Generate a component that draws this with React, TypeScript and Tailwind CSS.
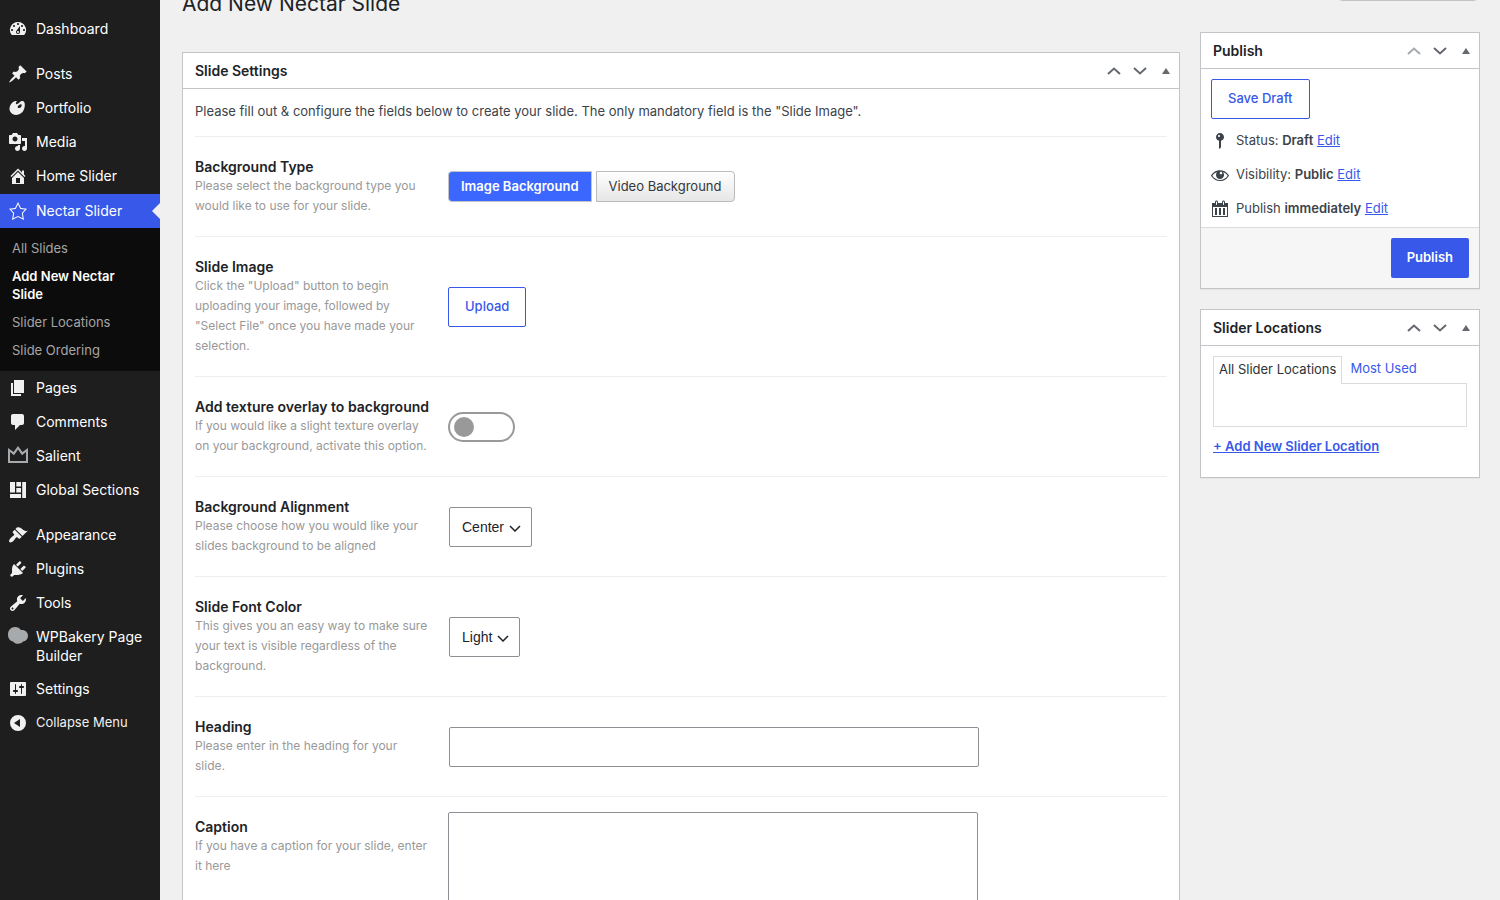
import type { ReactNode } from "react";
import clsx from "clsx";

const icons = {
  dashboard:
    "M3.76 16h12.48A7.998 7.998 0 0 0 10 3a7.998 7.998 0 0 0-6.24 13zM10 4c.55 0 1 .45 1 1s-.45 1-1 1-1-.45-1-1 .45-1 1-1zM6 6c.55 0 1 .45 1 1s-.45 1-1 1-1-.45-1-1 .45-1 1-1zm8 0c.55 0 1 .45 1 1s-.45 1-1 1-1-.45-1-1 .45-1 1-1zm-5.37 5.55L12 7v6c0 1.1-.9 2-2 2s-2-.9-2-2c0-.57.24-1.08.63-1.45zM4 10c.55 0 1 .45 1 1s-.45 1-1 1-1-.45-1-1 .45-1 1-1zm12 0c.55 0 1 .45 1 1s-.45 1-1 1-1-.45-1-1 .45-1 1-1zm-5 3c0-.55-.45-1-1-1s-1 .45-1 1 .45 1 1 1 1-.45 1-1z",
  post: "M10.44 3.02l1.82-1.82 6.36 6.35-1.83 1.82c-1.05-.68-2.48-.57-3.41.36l-.75.75c-.92.93-1.04 2.35-.35 3.41l-1.83 1.82-2.41-2.41-2.8 2.79c-.42.42-3.38 2.71-3.8 2.29s1.86-3.39 2.28-3.81l2.79-2.79L4.1 9.36l1.83-1.82c1.05.69 2.48.57 3.4-.36l.75-.75c.93-.92 1.05-2.35.36-3.41z",
  art: "M8.55 3.06c1.01.34-1.95 2.01-.1 3.13 1.04.63 3.31-2.22 4.45-2.86.97-.54 2.67-.65 3.53 1.23 1.09 2.38.14 8.57-3.79 11.06-3.97 2.5-8.97 1.23-10.7-2.66-2.01-4.53 3.12-11.09 6.61-9.9zm1.21 6.45c.73 1.64 4.7-.5 3.79-2.8-.59-1.49-4.48 1.25-3.79 2.8z",
  media:
    "M13 11V4c0-.55-.45-1-1-1h-1.67L9 1H5L3.67 3H2c-.55 0-1 .45-1 1v7c0 .55.45 1 1 1h10c.55 0 1-.45 1-1zM7 4.5c1.38 0 2.5 1.12 2.5 2.5S8.38 9.5 7 9.5 4.5 8.38 4.5 7 5.62 4.5 7 4.5zM14 6h5v10.5c0 1.38-1.12 2.5-2.5 2.5S14 17.88 14 16.5s1.12-2.5 2.5-2.5c.17 0 .34.02.5.05V9h-3V6zm-4 8.05V13h2v3.5c0 1.38-1.12 2.5-2.5 2.5S7 17.88 7 16.5 8.12 14 9.5 14c.17 0 .34.02.5.05z",
  home: "M16 8.5l1.53 1.53-1.06 1.06L10 4.6l-6.47 6.49-1.06-1.06L10 2.5l4 4v-2h2v4zm-6-2.46l6 5.99V18H4v-5.97zM12 17v-5H8v5h4z",
  star: "M10 1L7 7l-6 .75 4.13 4.62L4 19l6-3 6 3-1.12-6.63L19 7.75 13 7zm0 2.24l2.34 4.69 4.65.58-3.18 3.56.87 5.15L10 14.88l-4.68 2.34.87-5.15-3.18-3.56 4.65-.58z",
  page: "M6 15V2h10v13H6zm-1 1h8v2H3V5h2v11z",
  comments: "M5 2h9c1.1 0 2 .9 2 2v7c0 1.1-.9 2-2 2h-2l-5 5v-5H5c-1.1 0-2-.9-2-2V4c0-1.1.9-2 2-2z",
  crown: "M0 2l5.500 4L10 0l4.500 6L20 2v15H0zM2 6v9h16V6l-4 3.200L10 3.500 6 9.200z",
  layout: "M2 2h5v10.500H2zM8.300 2H13v4.500H8.300zM8.300 8H13v4.500H8.300zM14.200 2H18v16h-3.800zM2 14h11v4H2z",
  appearance:
    "M14.48 11.06L7.41 3.99l1.5-1.5c.5-.56 2.3-.47 3.51.32 1.21.8 1.43 1.28 2.91 2.1 1.18.64 2.45 1.26 4.45.85zm-.71.71L6.7 4.7 4.93 6.47c-.39.39-.39 1.02 0 1.41l1.06 1.06c.39.39.39 1.03 0 1.42-.6.6-1.43 1.11-2.21 1.69-.35.26-.7.53-1.01.84C1.43 14.23.4 16.08 1.4 17.07c.99 1 2.84-.03 4.18-1.36.31-.31.58-.66.85-1.02.57-.78 1.08-1.61 1.69-2.21.39-.39 1.02-.39 1.41 0l1.06 1.06c.39.39 1.02.39 1.41 0z",
  plugins:
    "M13.11 4.36L9.87 7.6 8 5.73l3.24-3.24c.35-.34 1.05-.2 1.56.32.52.51.66 1.21.31 1.55zm-8 1.77l.91-1.12 9.01 9.01-1.19.84c-.71.71-2.63 1.16-3.82 1.16H6.14L4.9 17.26c-.59.59-1.54.59-2.12 0-.59-.58-.59-1.53 0-2.12l1.24-1.24v-3.88c0-1.13.4-3.19 1.09-3.89zm7.26 3.97l3.24-3.24c.34-.35 1.04-.21 1.55.31.52.51.66 1.21.31 1.55l-3.24 3.25z",
  tools:
    "M16.68 9.77c-1.34 1.34-3.3 1.67-4.95.99l-5.41 6.52c-.99.99-2.59.99-3.58 0s-.99-2.59 0-3.57l6.52-5.42c-.68-1.65-.35-3.61.99-4.95 1.28-1.28 3.12-1.62 4.72-1.06l-2.89 2.89 2.82 2.82 2.86-2.87c.53 1.58.18 3.39-1.08 4.65zM3.81 16.21c.4.39 1.04.39 1.43 0 .4-.4.4-1.04 0-1.43-.39-.4-1.03-.4-1.43 0-.39.39-.39 1.03 0 1.43z",
  bakery:
    "M7 0c2.600 0 4.800 1.200 5.900 3 3.800-.6 7.100 1.900 7.100 5.600 0 3.300-2 5.700-4.900 6-1.300 1.500-3 2.200-5.100 2.200-2.100 0-3.800-.8-4.900-2.300C2 14 0 11.300 0 7.500 0 3.300 3 0 7 0z",
  settings:
    "M18 16V4c0-.55-.45-1-1-1H3c-.55 0-1 .45-1 1v12c0 .55.45 1 1 1h14c.55 0 1-.45 1-1zM8 11h1c.55 0 1 .45 1 1s-.45 1-1 1H8v1.5c0 .28-.22.5-.5.5s-.5-.22-.5-.5V13H6c-.55 0-1-.45-1-1s.45-1 1-1h1V5.500c0-.28.22-.5.5-.5s.5.22.5.5V11zm5-2h-1c-.55 0-1-.45-1-1s.45-1 1-1h1V5.500c0-.28.22-.5.5-.5s.5.22.5.5V7h1c.55 0 1 .45 1 1s-.45 1-1 1h-1v5.500c0 .28-.22.5-.5.5s-.5-.22-.5-.5V9z",
  collapse: "M10 2a8 8 0 1 1 0 16 8 8 0 0 1 0-16zm2 12V6l-6 4z",
  pin: "M14 6c0 1.86-1.28 3.41-3 3.86V16c0 1-2 2-2 2V9.86c-1.72-.45-3-2-3-3.86 0-2.21 1.79-4 4-4s4 1.79 4 4zM8 5c0 .55.45 1 1 1s1-.45 1-1-.45-1-1-1-1 .45-1 1z",
  eye: "M18.3 9.5C15 4.9 8.5 3.8 3.9 7.200c-1.2.9-2.2 2.100-3 3.400.2.4.5.8.8 1.200 3.300 4.600 9.600 5.600 14.200 2.400.9-.7 1.700-1.400 2.400-2.400.3-.4.5-.8.8-1.200-.3-.4-.5-.8-.8-1.100zm-8.200-2.300c.5-.5 1.300-.5 1.800 0s.5 1.300 0 1.800-1.300.5-1.800 0-.5-1.300 0-1.800zm-.1 7.700c-3.100 0-6-1.600-7.700-4.200C3.500 9 5.100 7.800 7 7.200c-.7.8-1 1.700-1 2.700 0 2.200 1.700 4.100 4 4.100 2.200 0 4.100-1.700 4.100-4v-.1c0-1-.4-2-1.100-2.700 1.900.6 3.500 1.800 4.700 3.500-1.700 2.600-4.600 4.200-7.700 4.200z",
  calendar:
    "M15 4h3v14H2V4h3V3c0-.83.67-1.5 1.5-1.5S8 2.17 8 3v1h4V3c0-.83.67-1.5 1.5-1.5S15 2.17 15 3v1zM6 3v2.500c0 .28.22.5.5.5s.5-.22.5-.5V3c0-.28-.22-.5-.5-.5S6 2.720 6 3zm7 0v2.500c0 .28.22.5.5.5s.5-.22.5-.5V3c0-.28-.22-.5-.5-.5s-.5.22-.5.5zm4 14V8H3v9h14zM7 16V9H5v7h2zm4 0V9H9v7h2zm4 0V9h-2v7h2z",
};

type IconName = keyof typeof icons;

function Icon({ name, className }: { name: IconName; className?: string }) {
  return (
    <svg viewBox="0 0 20 20" fill="currentColor" fillRule="evenodd" aria-hidden="true" className={clsx("size-5 shrink-0", className)}>
      <path d={icons[name]} />
    </svg>
  );
}

type MenuEntry = { label: string; icon: IconName; dim?: boolean; gap?: boolean };

const menuTop: MenuEntry[] = [
  { label: "Dashboard", icon: "dashboard" },
  { label: "Posts", icon: "post", gap: true },
  { label: "Portfolio", icon: "art" },
  { label: "Media", icon: "media" },
  { label: "Home Slider", icon: "home" },
];

const subMenu = ["All Slides", "Add New Nectar Slide", "Slider Locations", "Slide Ordering"];

const menuBottom: MenuEntry[] = [
  { label: "Pages", icon: "page" },
  { label: "Comments", icon: "comments" },
  { label: "Salient", icon: "crown", dim: true },
  { label: "Global Sections", icon: "layout" },
  { label: "Appearance", icon: "appearance", gap: true },
  { label: "Plugins", icon: "plugins" },
  { label: "Tools", icon: "tools" },
  { label: "WPBakery Page Builder", icon: "bakery", dim: true },
  { label: "Settings", icon: "settings" },
];

const menuLink = "flex gap-2 px-2 py-[7px] text-sm leading-[19px] text-white";

function MenuItem({ label, icon, dim, gap }: MenuEntry) {
  return (
    <li className={clsx(gap && "mt-[11px]")}>
      <a href="#" className={menuLink}>
        <Icon name={icon} className={dim ? "text-[#a7aaad]" : "text-[#f0f0f1]"} />
        <span>{label}</span>
      </a>
    </li>
  );
}

function Sidebar() {
  return (
    <nav className="w-40 shrink-0 bg-[#1e1e1e] pt-3">
      <ul>
        {menuTop.map((m) => (
          <MenuItem key={m.label} {...m} />
        ))}
        <li className="pt-px">
          <a href="#" className={clsx(menuLink, "relative bg-[#3858e9]")}>
            <Icon name="star" />
            <span>Nectar Slider</span>
            <span className="absolute right-0 top-1/2 -translate-y-1/2 border-8 border-transparent border-r-[#f0f0f0]" />
          </a>
          <ul className="bg-[#0c0c0c] pt-1.5 pb-[7px]">
            {subMenu.map((s) => (
              <li key={s}>
                <a
                  href="#"
                  className={clsx(
                    "block px-3 py-[5px] text-[13px] leading-[18px]",
                    s === "Add New Nectar Slide" ? "font-semibold text-white" : "text-[#a5a5a5]"
                  )}
                >
                  {s}
                </a>
              </li>
            ))}
          </ul>
        </li>
        {menuBottom.map((m) => (
          <MenuItem key={m.label} {...m} />
        ))}
        <li>
          <button type="button" className="flex gap-2 px-2 py-[7px] text-[13px] leading-[19px] text-[#f0f0f1]">
            <Icon name="collapse" />
            <span>Collapse Menu</span>
          </button>
        </li>
      </ul>
    </nav>
  );
}

function Panel({ title, firstInList, children }: { title: string; firstInList?: boolean; children: ReactNode }) {
  return (
    <section className="border border-[#c3c4c7] bg-white shadow-[0_1px_1px_rgba(0,0,0,0.04)]">
      <header className="flex h-9 items-center border-b border-[#c3c4c7] pl-3 text-[#646970]">
        <h2 className="flex-1 text-sm font-semibold text-[#1d2327]">{title}</h2>
        <button type="button" aria-label="Move up" className={clsx("flex w-[26px] justify-center", firstInList && "text-[#a7aaad]")}>
          <svg viewBox="0 0 14 8" className="h-2 w-3.5" fill="none" stroke="currentColor" strokeWidth="2">
            <path d="M1 7l6-5.500L13 7" />
          </svg>
        </button>
        <button type="button" aria-label="Move down" className="flex w-[26px] justify-center">
          <svg viewBox="0 0 14 8" className="h-2 w-3.5" fill="none" stroke="currentColor" strokeWidth="2">
            <path d="M1 1l6 5.500L13 1" />
          </svg>
        </button>
        <button type="button" aria-label="Toggle panel" className="flex w-[26px] justify-center">
          <svg viewBox="0 0 8 6" className="h-1.5 w-2" fill="currentColor">
            <path d="M4 0l4 6H0z" />
          </svg>
        </button>
      </header>
      {children}
    </section>
  );
}

function Field({ title, desc, htmlFor, children }: { title: string; desc: string; htmlFor?: string; children: ReactNode }) {
  return (
    <div className="flex border-t border-[#eeeeee]">
      <div className="w-[253px] shrink-0 py-5">
        <label htmlFor={htmlFor} className="block whitespace-nowrap text-sm leading-[19px] font-semibold text-[#1d2327]">
          {title}
        </label>
        <p className="pr-5 text-xs leading-5 text-[#999999]">{desc}</p>
      </div>
      <div className="flex flex-1 items-center py-[15px]">{children}</div>
    </div>
  );
}

function Select({ id, value }: { id: string; value: string }) {
  return (
    <div className="relative ml-px">
      <select
        id={id}
        className="h-10 appearance-none rounded-xs border border-[#8c8f94] bg-white pr-[26px] pl-3 font-['Liberation_Sans',sans-serif] text-sm text-[#1d2327]"
      >
        <option>{value}</option>
      </select>
      <svg viewBox="0 0 12 7" className="pointer-events-none absolute right-[11px] top-[18px] h-[7px] w-3" fill="none" stroke="#1d2327" strokeWidth="1.5">
        <path d="M1 1l5 5 5-5" />
      </svg>
    </div>
  );
}

const outlineButton = "h-10 rounded-xs border border-[#3858e9] bg-white px-4 text-[13px] font-medium text-[#3858e9]";

function SlideSettings() {
  return (
    <Panel title="Slide Settings">
      <div className="px-3">
        <p className="pt-3 pb-[15px] text-[13px] leading-5 text-[#3c434a]">
          Please fill out &amp; configure the fields below to create your slide. The only mandatory field is the "Slide
          Image".
        </p>
        <Field title="Background Type" desc="Please select the background type you would like to use for your slide.">
          <div className="flex gap-1 text-[13px]">
            <button
              type="button"
              aria-pressed="true"
              className="h-[31px] rounded-l-sm border border-[#c3c4c7] bg-[#3b67ff] px-3 font-semibold text-white"
            >
              Image Background
            </button>
            <button
              type="button"
              aria-pressed="false"
              className="h-[31px] rounded-r-sm border border-[#bbbbbb] bg-linear-to-b from-white to-[#e6e6e6] px-3 text-[#32373c]"
            >
              Video Background
            </button>
          </div>
        </Field>
        <Field
          title="Slide Image"
          desc={'Click the "Upload" button to begin uploading your image, followed by "Select File" once you have made your selection.'}
        >
          <button type="button" className={outlineButton}>
            Upload
          </button>
        </Field>
        <Field
          title="Add texture overlay to background"
          desc="If you would like a slight texture overlay on your background, activate this option."
          htmlFor="texture"
        >
          <label className="flex h-[30px] w-[67px] items-center rounded-full border-2 border-[#999999] px-1 has-checked:justify-end has-checked:border-[#3858e9]">
            <input id="texture" type="checkbox" className="size-5 appearance-none rounded-full bg-[#999999] checked:bg-[#3858e9]" />
          </label>
        </Field>
        <Field
          title="Background Alignment"
          desc="Please choose how you would like your slides background to be aligned"
          htmlFor="alignment"
        >
          <Select id="alignment" value="Center" />
        </Field>
        <Field
          title="Slide Font Color"
          desc="This gives you an easy way to make sure your text is visible regardless of the background."
          htmlFor="font-color"
        >
          <Select id="font-color" value="Light" />
        </Field>
        <Field title="Heading" desc="Please enter in the heading for your slide." htmlFor="heading">
          <input id="heading" type="text" className="ml-px h-10 w-[530px] rounded-xs border border-[#8c8f94] px-3 text-sm" />
        </Field>
        <Field title="Caption" desc="If you have a caption for your slide, enter it here" htmlFor="caption">
          <textarea id="caption" className="h-44 w-[530px] resize-none rounded-xs border border-[#8c8f94] px-3 py-2 text-sm" />
        </Field>
      </div>
    </Panel>
  );
}

const publishRows: { icon: IconName; label: string; value: string }[] = [
  { icon: "pin", label: "Status:", value: "Draft" },
  { icon: "eye", label: "Visibility:", value: "Public" },
  { icon: "calendar", label: "Publish", value: "immediately" },
];

function PublishPanel() {
  return (
    <Panel title="Publish" firstInList>
      <div className="px-2.5 pt-2.5 text-[13px] text-[#3c434a]">
        <button type="button" className={outlineButton}>
          Save Draft
        </button>
        <ul className="-ml-px pt-[5px] pb-px">
          {publishRows.map((r) => (
            <li key={r.label} className="flex h-[34px] items-center gap-1.5">
              <Icon name={r.icon} />
              <span>
                {r.label} <b className="font-semibold">{r.value}</b>{" "}
                <a href="#" className="text-[#3858e9] underline">
                  Edit
                </a>
              </span>
            </li>
          ))}
        </ul>
      </div>
      <div className="flex justify-end border-t border-[#dcdcde] bg-[#f6f6f6] p-2.5">
        <button type="button" className="h-10 rounded-xs bg-[#3858e9] px-4 text-[13px] font-semibold text-white">
          Publish
        </button>
      </div>
    </Panel>
  );
}

function LocationsPanel() {
  return (
    <Panel title="Slider Locations">
      <div className="px-3 pt-2.5 pb-[21px] text-[13px] leading-5">
        <div className="flex">
          <button type="button" className="-mb-px border border-b-0 border-[#dcdcde] bg-white px-[5px] pt-0.5 pb-[5px] text-[#2c3338]">
            All Slider Locations
          </button>
          <button type="button" className="px-2 pt-0.5 pb-[5px] text-[#3858e9]">
            Most Used
          </button>
        </div>
        <div className="h-11 border border-[#dcdcde]" />
        <a href="#" className="mt-[9px] inline-block font-semibold text-[#3858e9] underline">
          + Add New Slider Location
        </a>
      </div>
    </Panel>
  );
}

export default function App() {
  return (
    <div className="flex h-screen overflow-hidden bg-[#f0f0f0] font-['Inter',sans-serif]">
      <Sidebar />
      <main className="flex min-w-0 flex-1 gap-5 pr-5 pl-[22px]">
        <div className="flex min-w-0 flex-1 flex-col">
          <h1 className="-mt-3 mb-8 text-[21px] leading-8 text-[#1d2327]">Add New Nectar Slide</h1>
          <SlideSettings />
        </div>
        <aside className="flex w-[280px] shrink-0 flex-col">
          <button
            type="button"
            aria-label="Screen Options"
            className="-mt-[29px] mr-0.5 mb-[31px] h-[30px] w-[140px] shrink-0 self-end rounded-b-sm border border-[#c3c4c7] bg-white"
          />
          <div className="flex flex-col gap-5">
            <PublishPanel />
            <LocationsPanel />
          </div>
        </aside>
      </main>
    </div>
  );
}
